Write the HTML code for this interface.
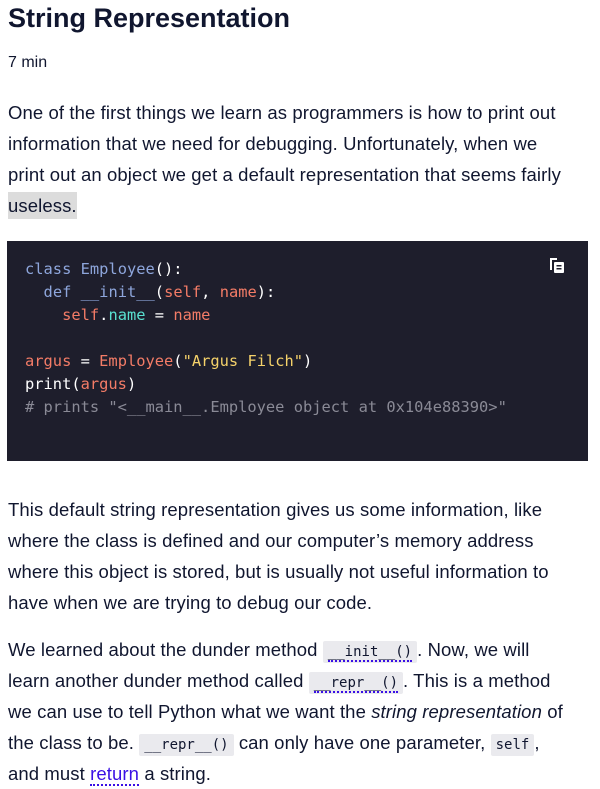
<!DOCTYPE html>
<html><head><style>
body{margin:0;background:#fff;color:#10162f;font-family:"Liberation Sans",sans-serif;width:600px;overflow:hidden}
h1{font-size:27px;font-weight:bold;margin:0;position:absolute;left:8px;top:0;line-height:36px}
.min{position:absolute;left:8px;top:52px;font-size:16px;line-height:22px}
p{position:absolute;left:8px;width:600px;margin:0;font-size:18.5px;line-height:31px;white-space:nowrap;letter-spacing:0.1px}
.hl{background:#dcdcdc;padding:3px 0}
pre{position:absolute;left:7px;top:241px;width:581px;height:220px;margin:0;background:#1e1e2c;box-sizing:border-box;padding:17px 18px;font-family:"DejaVu Sans Mono","Liberation Mono",monospace;font-size:15.4px;line-height:23px;color:#fff}
.k{color:#8ea6dc}.r{color:#f47c67}.c{color:#59e0d0}.s{color:#f5d26a}.g{color:#8a8a96}
code{font-family:"DejaVu Sans Mono","Liberation Mono",monospace;font-size:14px;line-height:1;background:#eaeaee;padding:3px 5px;border-radius:2px;letter-spacing:0}
.u{border-bottom:2px dotted #3a10e5}
a{color:#3a10e5;text-decoration:none;border-bottom:2px dotted #3a10e5}
</style></head><body>
<h1>String Representation</h1>
<div class="min">7 min</div>
<p style="top:97px">One of the first things we learn as programmers is how to print out<br>information that we need for debugging. Unfortunately, when we<br>print out an object we get a default representation that seems fairly<br><span class="hl">useless.</span></p>
<pre><span class="k">class</span> <span class="k">Employee</span>():
  <span class="k">def</span> <span class="k">__init__</span>(<span class="r">self</span>, <span class="r">name</span>):
    <span class="r">self</span>.<span class="c">name</span> = <span class="r">name</span>

<span class="r">argus</span> = <span class="r">Employee</span>(<span class="s">"Argus Filch"</span>)
print(<span class="r">argus</span>)
<span class="g"># prints "&lt;__main__.Employee object at 0x104e88390&gt;"</span></pre>
<svg style="position:absolute;left:548px;top:256px" width="18" height="18" viewBox="0 0 18 18"><path d="M2 2h7v2H4v10H2z" fill="#fff"/><rect x="6" y="6" width="10" height="11" rx="1" fill="#fff"/><rect x="8.5" y="9" width="5" height="1.5" fill="#1e1e2c"/><rect x="8.5" y="12" width="5" height="1.5" fill="#1e1e2c"/></svg>
<p style="top:494px">This default string representation gives us some information, like<br>where the class is defined and our computer’s memory address<br>where this object is stored, but is usually not useful information to<br>have when we are trying to debug our code.</p>
<p style="top:634px">We learned about the dunder method <code><span class="u">__init__()</span></code>. Now, we will<br>learn another dunder method called <code><span class="u">__repr__()</span></code>. This is a method<br>we can use to tell Python what we want the <i>string representation</i> of<br>the class to be. <code>__repr__()</code> can only have one parameter, <code>self</code>,<br>and must <a>return</a> a string.</p>
</body></html>
